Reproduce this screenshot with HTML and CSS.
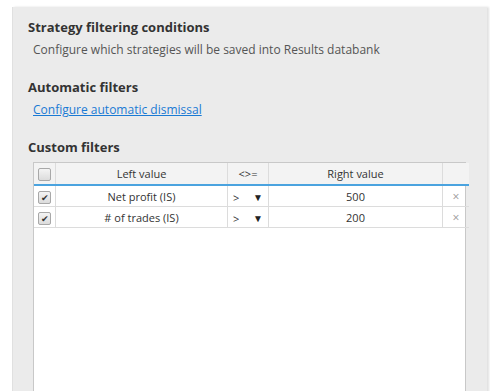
FILE: index.html
```html
<!DOCTYPE html>
<html lang="en">
<head>
    <meta charset="UTF-8">
    <title>Strategy filtering conditions</title>
    <link rel="stylesheet" href="styles.css">
</head>
<body>
    <div class="panel">
        <h2 class="section-title">Strategy filtering conditions</h2>
        <p class="section-desc">Configure which strategies will be saved into Results databank</p>

        <h2 class="section-title">Automatic filters</h2>
        <p class="section-desc"><a href="#" class="link">Configure automatic dismissal</a></p>

        <h2 class="section-title">Custom filters</h2>
        <div class="grid">
            <table class="filters">
                <thead>
                    <tr>
                        <th class="col-check"><span class="checkbox"></span></th>
                        <th class="col-left">Left value</th>
                        <th class="col-op">&lt;&gt;=</th>
                        <th class="col-right">Right value</th>
                        <th class="col-del"></th>
                    </tr>
                </thead>
                <tbody>
                    <tr>
                        <td class="col-check"><span class="checkbox checked">&#10004;</span></td>
                        <td class="col-left">Net profit (IS)</td>
                        <td class="col-op"><div class="op-select"><span>&gt;</span><span class="arrow">&#9660;</span></div></td>
                        <td class="col-right">500</td>
                        <td class="col-del">&times;</td>
                    </tr>
                    <tr>
                        <td class="col-check"><span class="checkbox checked">&#10004;</span></td>
                        <td class="col-left"># of trades (IS)</td>
                        <td class="col-op"><div class="op-select"><span>&gt;</span><span class="arrow">&#9660;</span></div></td>
                        <td class="col-right">200</td>
                        <td class="col-del">&times;</td>
                    </tr>
                </tbody>
            </table>
        </div>
    </div>
</body>
</html>
```

FILE: styles.css
```css
body {
    margin: 0;
    background: #fff;
    font-family: "Open Sans", Arial, sans-serif;
    color: #333;
    overflow: hidden;
}

.panel {
    margin: 7px 0 0 12px;
    width: 459px;
    height: 400px;
    padding: 10px 0 0 15px;
    background: #ebebeb;
    border-left: 1px solid #e0e0e0;
    box-shadow: 2px 0 2px rgba(0, 0, 0, 0.12);
}

.section-title {
    margin: 0;
    font-size: 13px;
    font-weight: bold;
    line-height: 20px;
    color: #333;
}

.section-desc {
    margin: 3px 0 17px 5px;
    font-size: 12px;
    line-height: 20px;
    color: #555;
}

.link {
    color: #1a7ad4;
    text-decoration: underline;
}

.grid {
    margin: 5px 0 0 5px;
    width: 431px;
    height: 300px;
    background: #fff;
    border: 1px solid #c8c8c8;
}

.filters {
    width: 100%;
    table-layout: fixed;
    border-collapse: collapse;
    font-size: 11px;
    color: #333;
}

.filters th {
    height: 21px;
    padding: 0;
    background: #f3f3f3;
    font-weight: normal;
    border-left: 1px solid #dcdcdc;
    border-bottom: 2px solid #4aa3df;
}

.filters td {
    height: 20px;
    padding: 0;
    border-left: 1px solid #dcdcdc;
    border-bottom: 1px solid #dcdcdc;
    text-align: center;
}

.filters th:first-child,
.filters td:first-child {
    border-left: none;
}

.col-check { width: 21px; }
.col-left { width: 171px; }
.col-op { width: 40px; }
.col-right { width: 173px; }
.col-del { width: 26px; }

.checkbox {
    display: inline-block;
    width: 11px;
    height: 11px;
    border: 1px solid #a8a8a8;
    border-radius: 2px;
    background: linear-gradient(#f4f4f4, #dcdcdc);
    vertical-align: middle;
    font-size: 9px;
    line-height: 11px;
    color: #333;
    text-align: center;
}

.op-select {
    display: flex;
    justify-content: space-between;
    align-items: center;
    padding: 2px 5px 0 5px;
}

.arrow {
    font-size: 10px;
    color: #222;
}

.filters td.col-del {
    color: #999;
    font-size: 12px;
}
```
